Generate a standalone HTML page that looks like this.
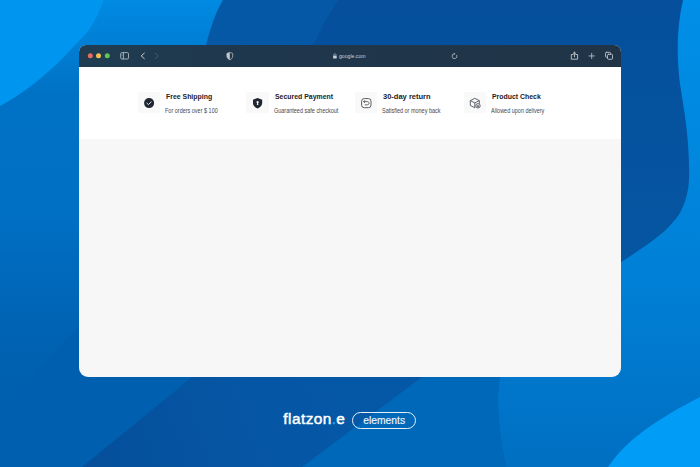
<!DOCTYPE html>
<html><head><meta charset="utf-8">
<style>
html,body{margin:0;padding:0;}
body{width:700px;height:467px;position:relative;overflow:hidden;background:#0557a5;font-family:"Liberation Sans",sans-serif;}
#bg{position:absolute;left:0;top:0;}
.win{position:absolute;left:79px;top:45px;width:542px;height:332px;border-radius:7px 7px 9px 9px;overflow:hidden;background:#f7f7f7;}
.bar{position:absolute;left:0;top:0;width:542px;height:22px;background:linear-gradient(90deg,#1f3d52 0%,#1f384d 22%,#1f364b 50%,#213447 100%);}
.bar svg{position:absolute;left:0;top:0;}
.url{position:absolute;left:260px;top:9px;font-size:5.15px;line-height:5.15px;color:#ccd1d6;white-space:nowrap;}
.top{position:absolute;left:0;top:22px;width:542px;height:72px;background:#fff;}
.feat{position:absolute;top:24.5px;width:100px;height:22px;}
.box{position:absolute;left:-0.5px;top:0;width:22.5px;height:21.5px;background:#f9f9f9;}
.box svg{position:absolute;left:0.5px;top:0;}
.tt{position:absolute;left:27.8px;top:1.3px;font-size:7.45px;line-height:7.45px;font-weight:bold;color:#1d2127;white-space:nowrap;transform:scaleX(0.93);transform-origin:0 0;}
.st{position:absolute;left:27px;top:16.1px;font-size:6.7px;line-height:6.7px;color:#44494f;white-space:nowrap;transform:scaleX(0.82);transform-origin:0 0;}
.logo{position:absolute;left:283.3px;top:411px;font-size:15.4px;line-height:15.4px;letter-spacing:0.45px;-webkit-text-stroke:0.45px #fff;color:#fff;white-space:nowrap;}
.pill{position:absolute;left:352.3px;top:411.9px;width:61.5px;height:14.9px;border:1.1px solid #e6eef8;border-radius:9px;}
.pill span{position:absolute;left:10px;top:2.8px;font-size:10.3px;line-height:10.3px;color:#eef4fb;-webkit-text-stroke:0.15px #eef4fb;}
</style></head><body>
<svg id="bg" width="700" height="467" viewBox="0 0 700 467">
<defs>
<linearGradient id="gL" gradientUnits="userSpaceOnUse" x1="0" y1="0" x2="0" y2="467"><stop offset="0" stop-color="#008ae2"/><stop offset="0.2" stop-color="#0072c5"/><stop offset="0.45" stop-color="#0070c5"/><stop offset="0.72" stop-color="#0062b2"/><stop offset="1" stop-color="#005eae"/></linearGradient>
<linearGradient id="gR" gradientUnits="userSpaceOnUse" x1="0" y1="0" x2="0" y2="467"><stop offset="0" stop-color="#008fe8"/><stop offset="0.6" stop-color="#0080d6"/><stop offset="1" stop-color="#006fc2"/></linearGradient>
</defs>
<linearGradient id="gB" gradientUnits="userSpaceOnUse" x1="100" y1="467" x2="330" y2="380"><stop offset="0" stop-color="#054f9b"/><stop offset="0.5" stop-color="#0555a3"/><stop offset="1" stop-color="#0558a6"/></linearGradient><rect width="700" height="467" fill="url(#gB)"/>
<linearGradient id="gD" gradientUnits="userSpaceOnUse" x1="0" y1="0" x2="0" y2="300"><stop offset="0" stop-color="#054f9c"/><stop offset="1" stop-color="#0557a3"/></linearGradient><path d="M338 0 L700 0 L700 300 L620 263 L400 200 L300 80 C311 45 325 20 338 0 Z" fill="url(#gD)"/>
<path d="M0 0 L223 0 C214 15 208 35 204 55 L260 250 L330 300 L192 377 L82 467 L0 467 Z" fill="url(#gL)"/>
<path d="M0 418 C25 385 55 350 80 325 L150 280 L192 377 L82 467 L0 467 Z" fill="#005fae"/>
<path d="M0 0 L104 0 C98 15 92 28 83 37 C70 50 60 62 49 71 C35 84 18 96 0 106 Z" fill="#0095ee"/>
<path d="M683 0 C676 30 677 60 680 84 C684 110 690 140 689 180 C688 200 680 215 674 221 C665 232 655 240 620 263 L500 377 C495 400 500 440 506 467 L700 467 L700 0 Z" fill="url(#gR)"/>
<path d="M422 377 L302 467 L506 467 C500 440 495 400 500 377 Z" fill="#0068b8"/>
<path d="M608 467 C622 447 640 428 700 397 L700 467 Z" fill="#009cf5"/>
</svg>

<div class="win">
  <div class="bar">
    <svg width="542" height="22" viewBox="0 0 542 22">
      <circle cx="11.3" cy="10.8" r="2.5" fill="#ec6a5f"/>
      <circle cx="19.5" cy="10.8" r="2.5" fill="#f3be50"/>
      <circle cx="28.3" cy="10.8" r="2.5" fill="#62c554"/>
      <g fill="none" stroke="#c3c8cd" stroke-width="0.8">
        <rect x="41.7" y="7.6" width="7.8" height="6.4" rx="1.1"/>
        <line x1="44.4" y1="7.6" x2="44.4" y2="14"/>
      </g>
      <g stroke="#9aa3ad" stroke-width="0.45">
        <line x1="42.6" y1="9.4" x2="43.7" y2="9.4"/><line x1="42.6" y1="10.6" x2="43.7" y2="10.6"/>
      </g>
      <path d="M65.3 8.2 L62.1 10.9 L65.3 13.6" fill="none" stroke="#c3c8cd" stroke-width="1" stroke-linecap="round" stroke-linejoin="round"/>
      <path d="M76.3 8.2 L79.2 10.9 L76.3 13.6" fill="none" stroke="#4d6075" stroke-width="0.9" stroke-linecap="round" stroke-linejoin="round"/>
      <path d="M150.8 7.4 L153.7 8.4 L153.7 11 C153.7 12.9 152.5 14.1 150.8 14.8 C149.1 14.1 147.9 12.9 147.9 11 L147.9 8.4 Z" fill="none" stroke="#c3c8cd" stroke-width="0.7"/>
      <path d="M150.8 7.4 L147.9 8.4 L147.9 11 C147.9 12.9 149.1 14.1 150.8 14.8 Z" fill="#c3c8cd"/>
      <rect x="254.1" y="10.4" width="3.6" height="3" rx="0.5" fill="#c8cdd2"/>
      <path d="M254.8 10.5 L254.8 9.5 C254.8 8.5 257 8.5 257 9.5 L257 10.5" fill="none" stroke="#c8cdd2" stroke-width="0.6"/>
      <path d="M375.5 8.8 A2.4 2.4 0 1 0 377.6 10" fill="none" stroke="#b4bac1" stroke-width="0.8"/>
      <path d="M374.9 7.7 L376.3 8.8 L374.9 9.9 Z" fill="#b4bac1"/>
      <g fill="none" stroke="#c3c8cd" stroke-width="0.9" stroke-linecap="round" stroke-linejoin="round">
        <path d="M494 9.5 L492.3 9.5 L492.3 14.2 L498.6 14.2 L498.6 9.5 L496.9 9.5"/>
        <path d="M495.45 11.8 L495.45 7.2 M494.1 8.5 L495.45 7.2 L496.8 8.5"/>
        <path d="M512.7 8.3 L512.7 13.6 M510 10.95 L515.4 10.95" stroke-width="0.8"/>
        <rect x="526.5" y="7.3" width="5" height="5" rx="1"/>
        <rect x="528.5" y="9.3" width="5" height="5" rx="1" fill="#1f344a"/>
      </g>
    </svg>
    <div class="url">google.com</div>
  </div>
  <div class="top">
    <div class="feat" style="left:59px;"><div class="box">
      <svg width="22" height="22" viewBox="0 0 22 22"><circle cx="11.1" cy="11.1" r="5" fill="#1f2631"/><path d="M8.9 11.2 L10.4 12.6 L13.2 9.9" fill="none" stroke="#e4e6ea" stroke-width="1" stroke-linecap="round" stroke-linejoin="round"/></svg>
    </div><div class="tt">Free Shipping</div><div class="st">For orders over $ 100</div></div>
    <div class="feat" style="left:167.8px;"><div class="box">
      <svg width="22" height="22" viewBox="0 0 22 22"><path d="M10.6 6 L15.2 7.7 L15.2 11 C15.2 13.7 13.2 15.5 10.6 16.4 C8 15.5 6 13.7 6 11 L6 7.7 Z" fill="#1f2631"/><circle cx="10.6" cy="10.2" r="1.1" fill="#f2f2f2"/><path d="M10.1 10.6 L11.1 10.6 L11.4 13.1 L9.8 13.1 Z" fill="#f2f2f2"/></svg>
    </div><div class="tt">Secured Payment</div><div class="st">Guaranteed safe checkout</div></div>
    <div class="feat" style="left:276.2px;"><div class="box">
      <svg width="22" height="22" viewBox="0 0 22 22"><rect x="6.6" y="6.6" width="9.4" height="9.1" rx="2.6" fill="none" stroke="#5a5e63" stroke-width="1"/><path d="M8.7 9.6 L12.3 9.6 C13.5 9.6 14 10.3 14 11.2 C14 12.1 13.4 12.8 12.3 12.8 L10.2 12.8" fill="none" stroke="#5a5e63" stroke-width="0.9" stroke-linecap="round"/><path d="M9.7 8.5 L8.6 9.6 L9.7 10.7" fill="none" stroke="#5a5e63" stroke-width="0.9" stroke-linecap="round" stroke-linejoin="round"/></svg>
    </div><div class="tt" style="transform:scaleX(1.01)">30-day return</div><div class="st">Satisfied or money back</div></div>
    <div class="feat" style="left:385.2px;"><div class="box">
      <svg width="22" height="22" viewBox="0 0 22 22"><g fill="none" stroke="#50555b" stroke-width="0.9" stroke-linejoin="round"><path d="M10.8 6.3 L15.3 8.6 L15.3 11.8 M10.8 6.3 L6.3 8.6 L6.3 13.4 L10.8 15.8 M6.3 8.6 L10.8 10.9 L15.3 8.6 M10.8 10.9 L10.8 15.8"/><circle cx="14" cy="13.8" r="2.2" fill="#f9f9f9"/><path d="M13.2 13.6 L13.2 14.7 L14.8 14.7 L14.8 13.6 Z" fill="#50555b" stroke-width="0.4"/></g></svg>
    </div><div class="tt">Product Check</div><div class="st">Allowed upon delivery</div></div>
  </div>
</div>

<div class="logo">flatzon<span style="color:#1aa3ff;-webkit-text-stroke-color:#1aa3ff;letter-spacing:0.2px">.</span>e</div>
<div class="pill"><span>elements</span></div>
</body></html>
